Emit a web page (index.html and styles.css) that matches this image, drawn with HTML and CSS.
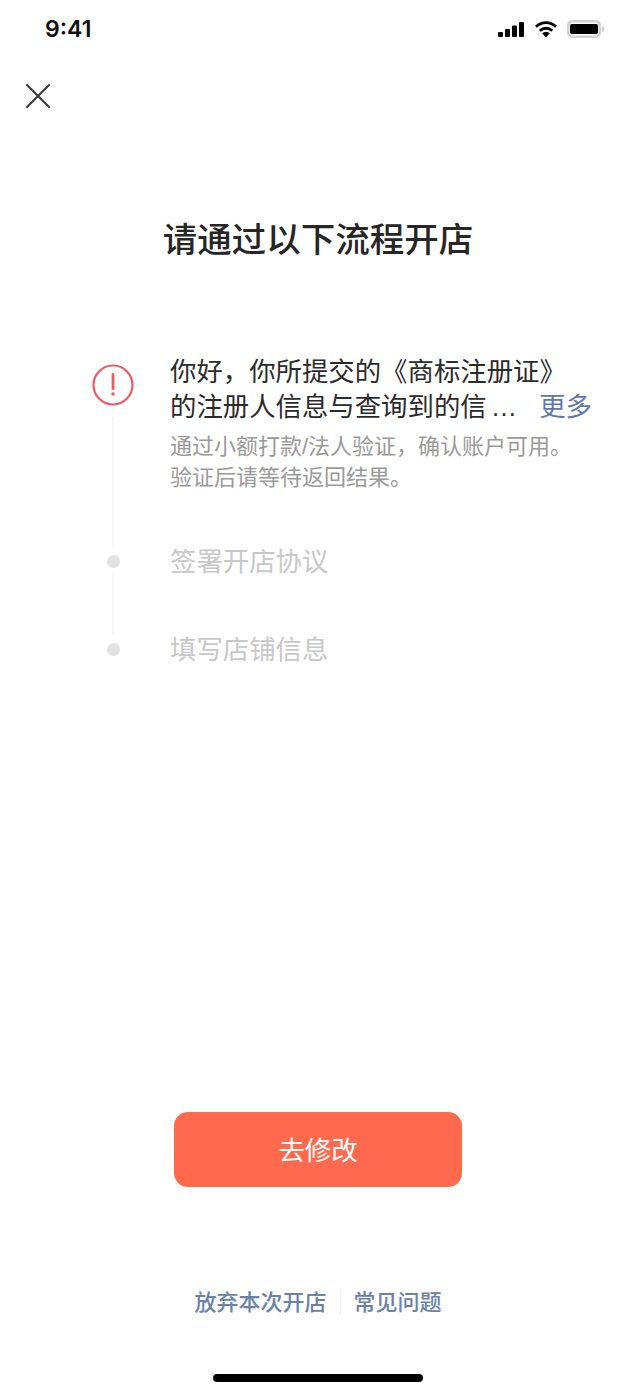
FILE: index.html
```html
<!DOCTYPE html>
<html lang="zh-CN">
<head>
<meta charset="utf-8">
<title>开店流程</title>
<link rel="stylesheet" href="styles.css">
</head>
<body>
<div class="page">
  <header class="status">
    <span class="time">9:41</span>
    <span class="status-icons">
      <svg class="signal" width="27" height="15" viewBox="0 0 27 15"><rect x="0" y="10" width="5" height="5" rx="1"/><rect x="7" y="7" width="5" height="8" rx="1"/><rect x="14" y="3.500" width="5" height="11.500" rx="1"/><rect x="21" y="0" width="5" height="15" rx="1"/></svg>
      <svg class="wifi" width="24" height="18" viewBox="0 0 24 18"><path d="M12 17.500 8.200 13.300a5.400 5.400 0 0 1 7.600 0Z"/><path d="M5.800 10.800a8.800 8.800 0 0 1 12.400 0" fill="none" stroke="#000" stroke-width="2.800"/><path d="M2 6.800a14.200 14.200 0 0 1 20 0" fill="none" stroke="#000" stroke-width="2.800"/></svg>
      <svg class="battery" width="38" height="18" viewBox="0 0 38 18"><rect x="1.250" y="1.250" width="31.500" height="15.500" rx="4" fill="none" stroke="#d2d2d2" stroke-width="2.500"/><rect x="3" y="4" width="28" height="10" rx="2" fill="#000"/><path d="M35 6c1.600.4 2.600 1.600 2.600 3s-1 2.600-2.600 3Z" fill="#d2d2d2"/></svg>
    </span>
  </header>

  <button class="close" aria-label="关闭">
    <svg width="26" height="26" viewBox="0 0 26 26"><path d="M2 2 24 24M24 2 2 24" fill="none" stroke="#3a3a3a" stroke-width="2.100" stroke-linecap="round"/></svg>
  </button>

  <h1 class="title">请通过以下流程开店</h1>

  <section class="steps">
    <div class="step step-first">
      <div class="rail rail-first">
        <svg class="alert" width="42" height="42" viewBox="0 0 42 42"><circle cx="21" cy="21" r="19.500" fill="none" stroke="#ee5a64" stroke-width="2.200"/><path d="M21 10.500V24.500" stroke="#ee5a64" stroke-width="2.800" stroke-linecap="round"/><circle cx="21" cy="30" r="1.800" fill="#ee5a64"/></svg>
        <span class="line line-first"></span>
      </div>
      <div class="body">
        <p class="msg">你好&#xFF0C;你所提交的《商标注册证》</p>
        <p class="msg msg-row"><span>的注册人信息与查询到的信<span class="ell">…</span></span><a class="more">更多</a></p>
        <p class="sub">通过小额打款/法人验证&#xFF0C;确认账户可用。<br>验证后请等待返回结果。</p>
      </div>
    </div>
    <div class="step step-mid">
      <div class="rail rail-dot"><span class="dot"></span><span class="line line-mid"></span></div>
      <div class="label">签署开店协议</div>
    </div>
    <div class="step">
      <div class="rail rail-dot"><span class="dot"></span></div>
      <div class="label">填写店铺信息</div>
    </div>
  </section>

  <button class="cta"><span class="cta-text">去修改</span></button>

  <footer class="links">
    <a>放弃本次开店</a>
    <span class="sep"></span>
    <a>常见问题</a>
  </footer>
  <div class="home"></div>
</div>
</body>
</html>
```
FILE: styles.css
```css
* { box-sizing: border-box; }
html, body { margin: 0; padding: 0; background: #fff; }
body { font-family: "Liberation Sans", "Noto Sans CJK SC", sans-serif; color: #2b2b2b; }
p, h1 { margin: 0; }
.page { width: 636px; height: 1392px; display: flex; flex-direction: column; overflow: hidden; }

.status { height: 58px; padding: 0 31px 0 45px; display: flex; align-items: center; justify-content: space-between; }
.time { font-family: Inter, "Liberation Sans", sans-serif; font-size: 23px; font-weight: 600; color: #111; }
.status-icons { display: flex; align-items: center; gap: 9px; }
.signal, .wifi { fill: #000; }

.close { width: 26px; height: 26px; margin: 25px 0 0 25px; padding: 0; border: 0; background: none; display: block; }
.close svg { display: block; }

.title { margin-top: 107px; text-align: center; font-size: 34.5px; line-height: 48px; font-weight: 500; color: #262626; }

.steps { margin-top: 91px; padding-left: 92px; display: flex; flex-direction: column; }
.step { display: flex; }
.step-first { height: 192px; }
.step-mid { height: 88px; }
.rail { width: 42px; margin-right: 36px; flex: none; display: flex; flex-direction: column; align-items: center; }
.rail-first { padding-top: 9px; }
.rail-dot { padding-top: 8px; }
.alert { display: block; flex: none; }
.line { width: 2px; background: #f5f5f5; flex: 1; }
.line-first { margin: 11px 0 2px; }
.line-mid { margin: 7px 0 0; }
.dot { width: 13px; height: 13px; border-radius: 50%; background: #e2e2e2; flex: none; }

.body { width: 424px; }
.msg { font-size: 26.400px; line-height: 35px; color: #2b2b2b; white-space: nowrap; }
.msg-row { display: flex; justify-content: space-between; padding-right: 2px; }
.ell { margin-left: 4px; }
.more { color: #5f7aa8; }
.sub { margin-top: 6px; font-size: 22px; line-height: 31px; color: #9a9a9a; white-space: nowrap; }
.label { font-size: 26.400px; line-height: 30px; color: #c8c8c8; }

.cta { width: 288px; height: 75px; margin: 447px auto 0; padding: 0 0 3px; display: block; border: 0; border-radius: 14px; background: #ff6a4f; color: #fff; font: inherit; font-size: 26.400px; }
.cta-text { display: block; }

.links { margin-top: 100px; height: 32px; display: flex; justify-content: center; align-items: center; gap: 13px; font-size: 22px; font-weight: 500; line-height: 32px; color: #6a82a6; }
.sep { width: 1px; height: 24px; background: #f0f0f0; }

.home { width: 210px; height: 8px; margin: 55px auto 0; border-radius: 4px; background: #000; flex: none; }
```
